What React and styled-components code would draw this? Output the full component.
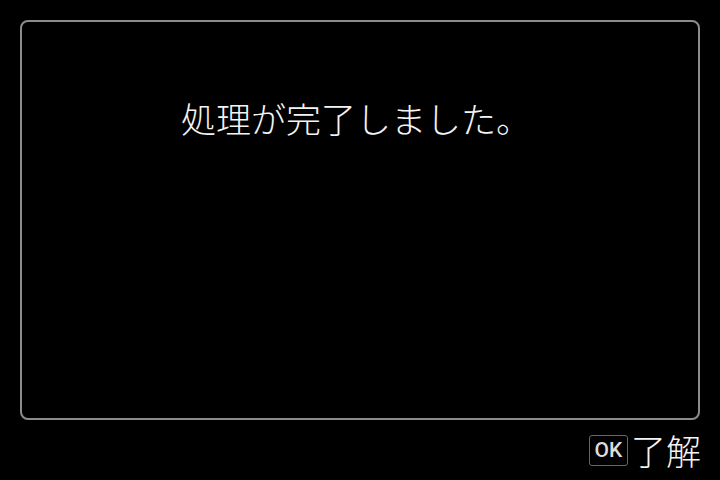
import styled, { createGlobalStyle } from "styled-components";

const GlobalStyle = createGlobalStyle`
  html, body {
    margin: 0;
    padding: 0;
    background: #000;
  }
  body {
    font-family: "Noto Sans CJK JP", "Noto Sans", sans-serif;
  }
`;

export default function App() {
  return (
    <Screen>
      <GlobalStyle />
      <Dialog>
        <Message>処理が完了しました。</Message>
      </Dialog>
      <Footer>
        <KeyCap>OK</KeyCap>
        <Label>了解</Label>
      </Footer>
    </Screen>
  );
}

const Screen = styled.div`
  width: 720px;
  height: 480px;
  box-sizing: border-box;
  padding: 20px 20px 0 20px;
  display: flex;
  flex-direction: column;
  background: #000;
`;

const Dialog = styled.div`
  width: 680px;
  height: 400px;
  box-sizing: border-box;
  border: 2px solid #8c8c8c;
  border-radius: 8px;
  padding: 78px 0 0 159px;
`;

const Message = styled.p`
  margin: 0;
  color: #f4f4f4;
  font-size: 35px;
  line-height: 35px;
  font-weight: 300;
`;

const Footer = styled.div`
  flex: 1;
  display: flex;
  justify-content: flex-end;
  align-items: center;
  gap: 3px;
`;

const KeyCap = styled.span`
  flex: 0 0 39px;
  height: 31px;
  box-sizing: border-box;
  border: 1px solid #666;
  border-radius: 3px;
  display: flex;
  align-items: center;
  justify-content: center;
  color: #dcdcdc;
  font-family: Roboto, "Liberation Sans", sans-serif;
  font-weight: 500;
  font-size: 21px;
  line-height: 1;
`;

const Label = styled.span`
  color: #f4f4f4;
  font-size: 35px;
  line-height: 40px;
  font-weight: 300;
  margin-right: -1px;
`;
